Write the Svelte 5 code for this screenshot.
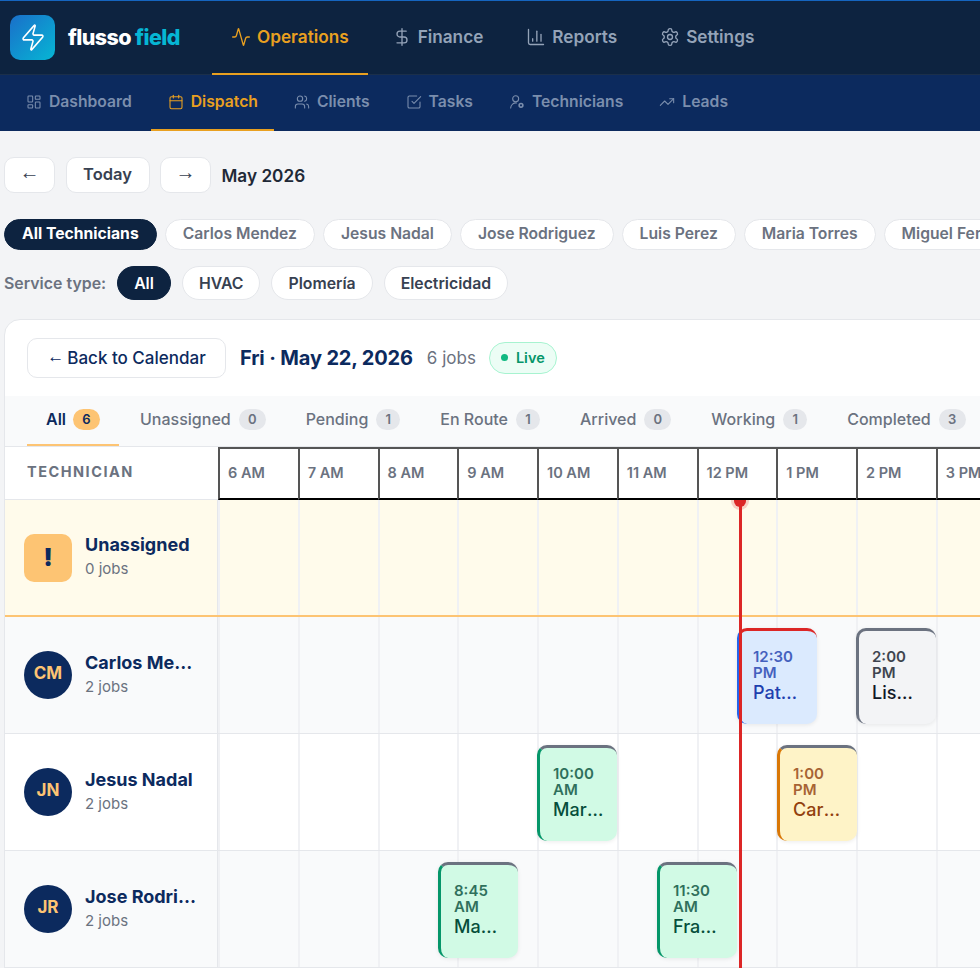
<script lang="ts">
	const hourWidth = 79.75;
	const startHour = 6;

	const mainNav = [
		{ label: 'Operations', icon: 'activity', active: true },
		{ label: 'Finance', icon: 'dollar' },
		{ label: 'Reports', icon: 'chart' },
		{ label: 'Settings', icon: 'settings' }
	];
	const subNav = [
		{ label: 'Dashboard', icon: 'dashboard' },
		{ label: 'Dispatch', icon: 'calendar', active: true },
		{ label: 'Clients', icon: 'users' },
		{ label: 'Tasks', icon: 'check' },
		{ label: 'Technicians', icon: 'tech' },
		{ label: 'Leads', icon: 'trending' }
	];
	const technicians = ['Carlos Mendez', 'Jesus Nadal', 'Jose Rodriguez', 'Luis Perez', 'Maria Torres', 'Miguel Fernandez'];
	const serviceTypes = ['HVAC', 'Plomería', 'Electricidad'];
	const tabs = [
		{ label: 'All', count: 6, active: true },
		{ label: 'Unassigned', count: 0 },
		{ label: 'Pending', count: 1 },
		{ label: 'En Route', count: 1 },
		{ label: 'Arrived', count: 0 },
		{ label: 'Working', count: 1 },
		{ label: 'Completed', count: 3 }
	];
	const hours = ['6 AM', '7 AM', '8 AM', '9 AM', '10 AM', '11 AM', '12 PM', '1 PM', '2 PM', '3 PM'];

	const rows = [
		{
			name: 'Carlos Mendez',
			initials: 'CM',
			count: 2,
			tint: true,
			jobs: [
				{ at: 12.5, time: '12:30 PM', client: 'Patricia Gomez', kind: 'enroute' },
				{ at: 14, time: '2:00 PM', client: 'Lisa Warren', kind: 'pending' }
			]
		},
		{
			name: 'Jesus Nadal',
			initials: 'JN',
			count: 2,
			tint: false,
			jobs: [
				{ at: 10, time: '10:00 AM', client: 'Marta Silva', kind: 'done' },
				{ at: 13, time: '1:00 PM', client: 'Carmen Ruiz', kind: 'working' }
			]
		},
		{
			name: 'Jose Rodriguez',
			initials: 'JR',
			count: 2,
			tint: true,
			jobs: [
				{ at: 8.75, time: '8:45 AM', client: 'Manuel Ortiz', kind: 'done' },
				{ at: 11.5, time: '11:30 AM', client: 'Francisco Vega', kind: 'done' }
			]
		}
	];

	const nowLeft = 6.53 * hourWidth;
	const jobLeft = (at: number) => Math.ceil((at - startHour) * hourWidth);
</script>

{#snippet icon(name: string, size: number)}
	<svg width={size} height={size} viewBox="0 0 24 24" fill="none" stroke="currentColor" stroke-width="1.6" stroke-linecap="round" stroke-linejoin="round">
		{#if name === 'activity'}
			<path d="M22 12h-2.48a2 2 0 0 0-1.93 1.46l-2.35 8.36a.25.25 0 0 1-.48 0L9.24 2.18a.25.25 0 0 0-.48 0l-2.35 8.36A2 2 0 0 1 4.49 12H2" />
		{:else if name === 'dollar'}
			<path d="M12 2v20" />
			<path d="M17 5H9.5a3.5 3.5 0 0 0 0 7h5a3.5 3.5 0 0 1 0 7H6" />
		{:else if name === 'chart'}
			<path d="M3 3v16a2 2 0 0 0 2 2h16" />
			<path d="M18 17V9" />
			<path d="M13 17V5" />
			<path d="M8 17v-3" />
		{:else if name === 'settings'}
			<path d="M12.22 2h-.44a2 2 0 0 0-2 2v.18a2 2 0 0 1-1 1.73l-.43.25a2 2 0 0 1-2 0l-.15-.08a2 2 0 0 0-2.73.73l-.22.38a2 2 0 0 0 .73 2.73l.15.1a2 2 0 0 1 1 1.72v.51a2 2 0 0 1-1 1.74l-.15.09a2 2 0 0 0-.73 2.73l.22.38a2 2 0 0 0 2.73.73l.15-.08a2 2 0 0 1 2 0l.43.25a2 2 0 0 1 1 1.73V20a2 2 0 0 0 2 2h.44a2 2 0 0 0 2-2v-.18a2 2 0 0 1 1-1.73l.43-.25a2 2 0 0 1 2 0l.15.08a2 2 0 0 0 2.73-.73l.22-.39a2 2 0 0 0-.73-2.73l-.15-.08a2 2 0 0 1-1-1.74v-.5a2 2 0 0 1 1-1.74l.15-.09a2 2 0 0 0 .73-2.73l-.22-.38a2 2 0 0 0-2.73-.73l-.15.08a2 2 0 0 1-2 0l-.43-.25a2 2 0 0 1-1-1.73V4a2 2 0 0 0-2-2z" />
			<circle cx="12" cy="12" r="3" />
		{:else if name === 'dashboard'}
			<rect x="3" y="3" width="7" height="9" rx="1" />
			<rect x="14" y="3" width="7" height="5" rx="1" />
			<rect x="14" y="12" width="7" height="9" rx="1" />
			<rect x="3" y="16" width="7" height="5" rx="1" />
		{:else if name === 'calendar'}
			<path d="M8 2v4" />
			<path d="M16 2v4" />
			<rect x="3" y="4" width="18" height="18" rx="2" />
			<path d="M3 10h18" />
		{:else if name === 'users'}
			<path d="M16 21v-2a4 4 0 0 0-4-4H6a4 4 0 0 0-4 4v2" />
			<circle cx="9" cy="7" r="4" />
			<path d="M22 21v-2a4 4 0 0 0-3-3.87" />
			<path d="M16 3.13a4 4 0 0 1 0 7.75" />
		{:else if name === 'check'}
			<path d="m9 11 3 3L22 4" />
			<path d="M21 12v7a2 2 0 0 1-2 2H5a2 2 0 0 1-2-2V5a2 2 0 0 1 2-2h11" />
		{:else if name === 'tech'}
			<circle cx="10" cy="7" r="4.5" />
			<path d="M2.5 21a8 8 0 0 1 9-7.6" />
			<circle cx="18" cy="17" r="2.8" stroke-width="2.4" />
		{:else if name === 'trending'}
			<path d="M22 7l-8.5 8.5-5-5L2 17" />
			<path d="M16 7h6v6" />
		{/if}
	</svg>
{/snippet}

<div class="page">
	<header class="topbar">
		<div class="brand">
			<div class="logo">
				<svg width="22" height="27" viewBox="2 1 20 22" preserveAspectRatio="none" fill="none" stroke="#fff" stroke-width="1.4" stroke-linecap="round" stroke-linejoin="round">
					<path d="M4 14a1 1 0 0 1-.78-1.63l9.9-10.2a.5.5 0 0 1 .86.46l-1.92 6.02A1 1 0 0 0 13 10h7a1 1 0 0 1 .78 1.63l-9.9 10.2a.5.5 0 0 1-.86-.46l1.92-6.02A1 1 0 0 0 11 14z" />
				</svg>
			</div>
			<span class="wordmark">flusso <em>field</em></span>
		</div>
		<nav class="main-nav">
			{#each mainNav as item}
				<a class="main-link" class:active={item.active} href="#top">
					{@render icon(item.icon, 20)}
					{item.label}
				</a>
			{/each}
		</nav>
	</header>

	<nav class="sub-nav">
		{#each subNav as item}
			<a class="sub-link" class:active={item.active} href="#top">
				{@render icon(item.icon, 16)}
				{item.label}
			</a>
		{/each}
	</nav>

	<main class="content">
		<div class="date-controls">
			<button class="ctl arrow">←</button>
			<button class="ctl today">Today</button>
			<button class="ctl arrow">→</button>
			<span class="month">May 2026</span>
		</div>

		<div class="tech-filter">
			<button class="pill on">All Technicians</button>
			{#each technicians as tech}
				<button class="pill">{tech}</button>
			{/each}
		</div>

		<div class="service-filter">
			<span class="service-label">Service type:</span>
			<button class="chip on">All</button>
			{#each serviceTypes as type}
				<button class="chip">{type}</button>
			{/each}
		</div>

		<section class="board">
			<div class="board-head">
				<button class="back"><span class="back-arrow">←</span> Back to Calendar</button>
				<h2>Fri · May 22, 2026</h2>
				<span class="job-total">6 jobs</span>
				<span class="live"><i></i>Live</span>
			</div>

			<div class="tabs">
				{#each tabs as tab}
					<button class="tab" class:active={tab.active}>
						{tab.label}
						<span class="badge" class:slim={tab.count === 1}>{tab.count}</span>
					</button>
				{/each}
			</div>

			<div class="schedule">
				<div class="time-head">
					<div class="tech-title">TECHNICIAN</div>
					{#each hours as hour}
						<div class="hour">{hour}</div>
					{/each}
				</div>

				<div class="row unassigned">
					<div class="tech-cell">
						<div class="warn">!</div>
						<div class="tech-meta">
							<div class="tech-name">Unassigned</div>
							<div class="tech-jobs">0 jobs</div>
						</div>
					</div>
					<div class="track">
						{#each hours as _}
							<div class="slot"></div>
						{/each}
					</div>
				</div>

				{#each rows as row}
					<div class="row" class:tint={row.tint}>
						<div class="tech-cell">
							<div class="avatar">{row.initials}</div>
							<div class="tech-meta">
								<div class="tech-name">{row.name}</div>
								<div class="tech-jobs">{row.count} jobs</div>
							</div>
						</div>
						<div class="track">
							{#each hours as _}
								<div class="slot"></div>
							{/each}
							{#each row.jobs as job}
								<div class="job {job.kind}" style="left: {jobLeft(job.at)}px">
									<div class="job-time">{job.time}</div>
									<div class="job-client">{job.client}</div>
								</div>
							{/each}
						</div>
					</div>
				{/each}

				<div class="now-layer">
					<div class="now-line" style="left: {nowLeft}px">
						<span class="now-dot"></span>
					</div>
				</div>
			</div>
		</section>
	</main>
</div>

<style>
	:global(body) {
		margin: 0;
		background: #f3f4f6;
	}

	.page {
		width: 980px;
		height: 968px;
		overflow: hidden;
		font-family: Inter, 'Liberation Sans', sans-serif;
		background: #f3f4f6;
		color: #0d2340;
	}

	button {
		font-family: inherit;
		cursor: pointer;
	}

	a {
		text-decoration: none;
	}

	.topbar {
		height: 75px;
		box-sizing: border-box;
		border-top: 1px solid #1565c0;
		border-bottom: 1px solid #1b2f4a;
		background: #0d2340;
		display: flex;
		align-items: flex-start;
		padding-left: 10px;
	}

	.brand {
		display: flex;
		align-items: center;
		height: 73px;
		gap: 13px;
		width: 202px;
	}

	.logo {
		width: 45px;
		height: 45px;
		border-radius: 10px;
		background: linear-gradient(135deg, #1a6fca, #06b6d4);
		display: flex;
		align-items: center;
		justify-content: center;
	}

	.wordmark {
		padding-bottom: 1px;
		font-size: 21.5px;
		font-weight: 800;
		letter-spacing: -0.6px;
		color: #fff;
	}

	.wordmark em {
		font-style: normal;
		color: #06b6d4;
	}

	.main-nav {
		display: flex;
		gap: 5px;
	}

	.main-link {
		display: flex;
		align-items: center;
		gap: 6px;
		padding: 0 19px 1px;
		height: 74px;
		box-sizing: border-box;
		border-bottom: 2px solid transparent;
		font-size: 17.2px;
		font-weight: 600;
		color: #94a3b8;
	}

	.main-link.active {
		color: #e9a020;
		border-bottom-color: #e9a020;
	}

	.sub-nav {
		height: 56px;
		background: #0c2a5e;
		display: flex;
		gap: 3px;
		padding-left: 9.5px;
	}

	.sub-link {
		display: flex;
		align-items: center;
		gap: 7px;
		padding: 0 16.5px 1px;
		box-sizing: border-box;
		border-bottom: 2px solid transparent;
		font-size: 15.7px;
		font-weight: 600;
		color: #7b8ead;
	}

	.sub-link.active {
		color: #e9a020;
		border-bottom-color: #e9a020;
	}

	.content {
		padding: 26px 0 0 4px;
	}

	.date-controls {
		display: flex;
		align-items: center;
		gap: 10.5px;
		height: 36px;
	}

	.ctl {
		height: 36px;
		background: #fff;
		border: 1px solid #e5e7eb;
		border-radius: 10px;
		color: #374151;
		padding: 0;
		font-size: 16.5px;
		font-weight: 600;
	}

	.arrow {
		width: 51px;
		padding-bottom: 6px;
		font-family: 'Liberation Sans', sans-serif;
		font-size: 20px;
		font-weight: 400;
	}

	.today {
		width: 84px;
		padding-bottom: 3px;
	}

	.month {
		font-size: 17.2px;
		font-weight: 600;
		color: #1f2937;
	}

	.tech-filter {
		display: flex;
		gap: 8px;
		margin-top: 26px;
	}

	.pill {
		flex: none;
		height: 31px;
		padding: 0 17px 2px;
		background: #fff;
		border: 1px solid #e5e7eb;
		border-radius: 999px;
		color: #6b7280;
		font-size: 15.7px;
		font-weight: 600;
	}

	.pill.on {
		background: #0d2340;
		border-color: #0d2340;
		color: #fff;
		font-weight: 700;
	}

	.service-filter {
		display: flex;
		align-items: center;
		gap: 11px;
		margin-top: 16px;
	}

	.service-label {
		font-size: 15.9px;
		font-weight: 600;
		color: #6b7280;
	}

	.chip {
		height: 34px;
		padding: 0 16px;
		background: #fff;
		border: 1px solid #e5e7eb;
		border-radius: 999px;
		color: #374151;
		font-size: 15.8px;
		font-weight: 600;
	}

	.chip.on {
		background: #0d2340;
		border-color: #0d2340;
		color: #fff;
	}

	.board {
		margin-top: 19px;
		width: 1300px;
		background: #fff;
		border: 1px solid #e5e7eb;
		border-radius: 16px 0 0 0;
		overflow: hidden;
	}

	.board-head {
		height: 76px;
		display: flex;
		align-items: center;
		padding-left: 22px;
	}

	.back {
		height: 40px;
		width: 199px;
		padding: 0;
		background: #fff;
		border: 1px solid #e5e7eb;
		border-radius: 10px;
		color: #0c2a5e;
		font-size: 17px;
		font-weight: 500;
	}

	.back-arrow {
		position: relative;
		top: -2px;
		margin-right: -1.5px;
		font-family: 'Liberation Sans', sans-serif;
	}

	h2 {
		margin: 0 14px 0 14px;
		font-size: 20px;
		font-weight: 700;
		letter-spacing: -0.15px;
		color: #0c2a5e;
	}

	.job-total {
		font-size: 17px;
		color: #6b7280;
	}

	.live {
		display: flex;
		align-items: center;
		gap: 8px;
		height: 32px;
		box-sizing: border-box;
		margin-left: 13px;
		padding: 0 11px 1px;
		border: 1px solid #a7f3d0;
		border-radius: 999px;
		background: #ecfdf5;
		color: #059669;
		font-size: 14.5px;
		font-weight: 600;
	}

	.live i {
		width: 7px;
		height: 7px;
		border-radius: 50%;
		background: #10b981;
	}

	.tabs {
		height: 50px;
		display: flex;
		gap: 2px;
		padding-left: 22px;
		background: #f9fafb;
		border-bottom: 1px solid #e5e7eb;
	}

	.tab {
		display: flex;
		align-items: center;
		gap: 8px;
		padding: 0 19px 2px;
		background: none;
		border: 0;
		border-bottom: 2px solid transparent;
		color: #6b7280;
		font-size: 16px;
		font-weight: 500;
	}

	.tab.active {
		gap: 7px;
		color: #0c2a5e;
		font-weight: 600;
		border-bottom-color: #fdc473;
	}

	.badge {
		min-width: 9px;
		padding: 0 9px;
		height: 21px;
		line-height: 21px;
		border-radius: 999px;
		background: #e5e7eb;
		color: #6b7280;
		font-size: 13px;
		font-weight: 600;
	}

	.badge.slim {
		padding: 0 7.5px;
	}

	.tab.active .badge {
		background: #fdc473;
		color: #0c2a5e;
	}

	.schedule {
		position: relative;
	}

	.time-head {
		display: flex;
		height: 53px;
		background: #fff;
		position: relative;
		z-index: 3;
	}

	.tech-title {
		width: 213px;
		flex: none;
		box-sizing: border-box;
		display: flex;
		align-items: center;
		padding: 0 0 3px 22px;
		border-bottom: 1px solid #e5e7eb;
		font-size: 14.5px;
		font-weight: 700;
		letter-spacing: 1.5px;
		color: #6b7280;
	}

	.hour {
		width: 79.75px;
		flex: none;
		box-sizing: border-box;
		display: flex;
		align-items: center;
		padding: 0 0 2px 8px;
		border: 2px solid #555;
		border-width: 2px 0 0 2px;
		border-bottom: 2px solid #000;
		font-size: 14.5px;
		font-weight: 600;
		color: #6b7280;
	}

	.row {
		display: flex;
		height: 117px;
		box-sizing: border-box;
		border-bottom: 1px solid #e5e7eb;
	}

	.row.tint {
		background: #f9fafb;
	}

	.row.unassigned {
		background: #fffbeb;
		border-bottom: 2px solid #fdc473;
	}

	.tech-cell {
		width: 213px;
		flex: none;
		box-sizing: border-box;
		display: flex;
		align-items: center;
		gap: 13px;
		padding: 0 20px 0 19px;
		border-right: 1px solid #e5e7eb;
	}

	.warn,
	.avatar {
		width: 48px;
		height: 48px;
		flex: none;
		display: flex;
		align-items: center;
		justify-content: center;
		font-weight: 700;
	}

	.warn {
		border-radius: 10px;
		background: #fdc473;
		color: #0c2a5e;
		font-size: 24px;
		font-weight: 900;
	}

	.avatar {
		box-sizing: border-box;
		padding-bottom: 5px;
		border-radius: 50%;
		background: #0c2a5e;
		color: #fdc473;
		font-size: 17px;
	}

	.tech-meta {
		min-width: 0;
		padding-bottom: 2px;
	}

	.tech-name {
		white-space: nowrap;
		overflow: hidden;
		text-overflow: ellipsis;
		font-size: 18px;
		font-weight: 700;
		line-height: 22px;
		color: #0c2a5e;
	}

	.tech-jobs {
		margin-top: 3px;
		font-size: 15px;
		line-height: 20px;
		color: #6b7280;
	}

	.track {
		position: relative;
		display: flex;
		flex: 1;
	}

	.slot {
		width: 79.75px;
		flex: none;
		box-sizing: border-box;
		border-left: 2px solid #f0f1f4;
	}

	.job {
		position: absolute;
		top: 11px;
		width: 79.5px;
		height: 96px;
		box-sizing: border-box;
		padding: 18px 12.5px 0 13px;
		border-top: 3px solid #6b7280;
		border-left: 3px solid;
		border-radius: 10px;
		box-shadow: 0 1px 4px rgba(0, 0, 0, 0.08);
	}

	.job-time {
		font-size: 15px;
		font-weight: 600;
		line-height: 16px;
		opacity: 0.8;
	}

	.job-client {
		margin-top: 1px;
		white-space: nowrap;
		overflow: hidden;
		text-overflow: ellipsis;
		font-size: 18px;
		font-weight: 500;
		line-height: 22px;
	}

	.done {
		background: #d1fae5;
		border-left-color: #059669;
		color: #064e3b;
	}

	.working {
		background: #fef3c7;
		border-left-color: #d97706;
		color: #92400e;
	}

	.enroute {
		background: #dbeafe;
		border-left-color: #2563eb;
		border-top-color: #dc2626;
		color: #1e40af;
	}

	.pending {
		background: #f3f4f6;
		border-left-color: #6b7280;
		color: #111827;
	}

	.now-layer {
		position: absolute;
		top: 53px;
		left: 213px;
		right: 0;
		bottom: 0;
		overflow: hidden;
		pointer-events: none;
	}

	.now-line {
		position: absolute;
		top: 0;
		bottom: 0;
		width: 3px;
		background: #dc2626;
	}

	.now-dot {
		position: absolute;
		top: -5px;
		left: -4.5px;
		width: 12px;
		height: 12px;
		border-radius: 50%;
		background: #dc2626;
		box-shadow: 0 0 0 3px rgba(220, 38, 38, 0.2);
	}
</style>
